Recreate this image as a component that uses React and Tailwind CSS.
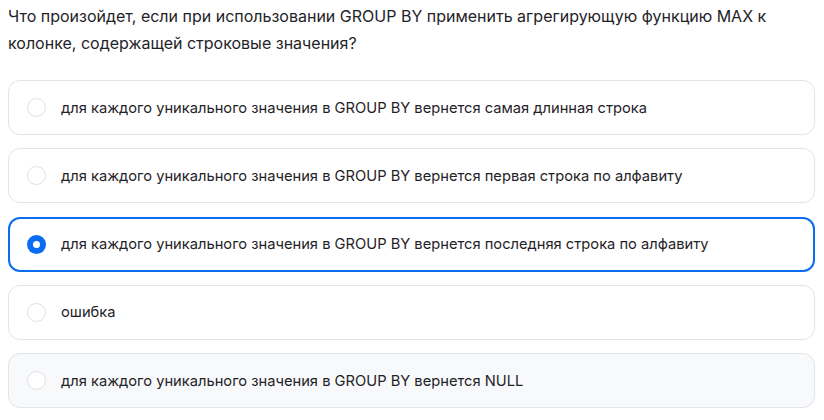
import React, { useState } from 'react';

const options = [
  'для каждого уникального значения в GROUP BY вернется самая длинная строка',
  'для каждого уникального значения в GROUP BY вернется первая строка по алфавиту',
  'для каждого уникального значения в GROUP BY вернется последняя строка по алфавиту',
  'ошибка',
  'для каждого уникального значения в GROUP BY вернется NULL',
];

export default function App() {
  const [selected, setSelected] = useState(2);
  const hovered = 4;

  return (
    <div className="w-[824px] h-[420px] bg-white px-2 pt-[3px] font-['Inter',sans-serif] text-[#1f2328]">
      <p className="text-[16px] leading-[27px] pr-2">
        Что произойдет, если при использовании GROUP BY применить агрегирующую функцию MAX к колонке, содержащей строковые значения?
      </p>
      <div className="mt-[23px] flex flex-col gap-[13.25px] w-[807px]">
        {options.map((text, i) => {
          const isSel = selected === i;
          return (
            <button
              key={i}
              onClick={() => setSelected(i)}
              className={`h-[55px] flex items-center rounded-[12px] text-left ${
                isSel
                  ? 'border-2 border-[#0a6cf0] bg-white pl-[17px]'
                  : `border border-[#e3e4e8] pl-[18px] ${i === hovered ? 'bg-[#f8f9fb]' : 'bg-white'}`
              }`}
            >
              {isSel ? (
                <span className="w-[19px] h-[19px] rounded-full bg-[#0a6cf0] flex items-center justify-center shrink-0">
                  <span className="w-[7px] h-[7px] rounded-full bg-white" />
                </span>
              ) : (
                <span className="w-[19px] h-[19px] rounded-full border border-[#e0e1e5] bg-white shrink-0" />
              )}
              <span className="ml-[15px] text-[14.7px] leading-[20px]">{text}</span>
            </button>
          );
        })}
      </div>
    </div>
  );
}
